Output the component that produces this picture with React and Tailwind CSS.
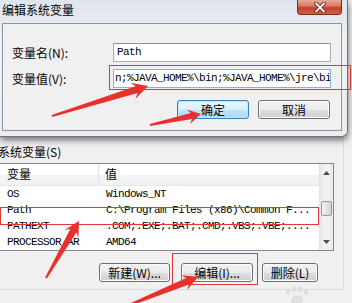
import React from 'react';

const cjk = "font-['Noto_Sans_CJK_SC','Microsoft_YaHei',sans-serif]";
const mono = "font-['Liberation_Mono','Noto_Sans_CJK_SC',monospace] text-[11px] tracking-[-0.6px]";

function arrowPoints([x1, y1], [x2, y2], tail, shaft, head, headLen) {
  const dx = x2 - x1;
  const dy = y2 - y1;
  const len = Math.hypot(dx, dy);
  const ux = dx / len;
  const uy = dy / len;
  const nx = -uy;
  const ny = ux;
  const bx = x2 - ux * headLen;
  const by = y2 - uy * headLen;
  const nb = x2 - ux * headLen * 0.75;
  const mb = y2 - uy * headLen * 0.75;
  const pts = [
    [x1 + (nx * tail) / 2, y1 + (ny * tail) / 2],
    [nb + (nx * shaft) / 2, mb + (ny * shaft) / 2],
    [bx + (nx * head) / 2, by + (ny * head) / 2],
    [x2, y2],
    [bx - (nx * head) / 2, by - (ny * head) / 2],
    [nb - (nx * shaft) / 2, mb - (ny * shaft) / 2],
    [x1 - (nx * tail) / 2, y1 - (ny * tail) / 2],
  ];
  return pts.map((p) => p.map((v) => v.toFixed(1)).join(',')).join(' ');
}

function WinButton({ children, className = '', isDefault = false }) {
  return (
    <div
      className={`h-[19px] flex items-center justify-center rounded-[3px] border text-[12px] leading-none text-black ${cjk} ${
        isDefault
          ? 'border-[#3c7fb1] bg-[linear-gradient(#eaf6fd_0%,#d9f0fc_50%,#bee6fd_51%,#a7d9f5_100%)] shadow-[inset_0_0_0_1px_#c4e5f6]'
          : 'border-[#707070] bg-[linear-gradient(#f2f2f2_0%,#ebebeb_50%,#dddddd_51%,#cfcfcf_100%)] shadow-[inset_0_0_0_1px_#fcfcfc]'
      } ${className}`}
    >
      {children}
    </div>
  );
}

const rows = [
  ['OS', 'Windows_NT'],
  ['Path', 'C:\\Program Files (x86)\\Common F...'],
  ['PATHEXT', '.COM;.EXE;.BAT;.CMD;.VBS;.VBE;....'],
  ['PROCESSOR_AR', 'AMD64'],
];

export default function App() {
  return (
    <div className={`w-[352px] h-[303px] relative overflow-hidden bg-[#f0f0f0] ${cjk}`}>
      {/* edit dialog */}
      <div className="relative z-10 w-[348px] h-[137px] rounded-br-[6px] border-r border-b border-[#6d7177] bg-[linear-gradient(#dfe5ec,#edf0f4_30%,#e9edf1)] shadow-[0_3px_7px_rgba(0,0,0,0.55)]">
        <div className="h-[23px] flex justify-between">
          <div className="pl-[2px] pt-[2px] text-[12px] leading-[16px] text-black">编辑系统变量</div>
          <div className="mr-[5px] w-[45px] h-[15px] rounded-b-[4px] border border-t-0 border-[#7a2e22] bg-[linear-gradient(#e9a99b,#d8735f_45%,#c4402a_55%,#d0603f)] flex items-center justify-center">
            <svg width="12" height="11" viewBox="0 0 12 11">
              <path d="M2 1.5 L10 9.5 M10 1.5 L2 9.5" stroke="#5a1d14" strokeWidth="3.4" strokeLinecap="square" />
              <path d="M2 1.5 L10 9.5 M10 1.5 L2 9.5" stroke="#ffffff" strokeWidth="1.8" strokeLinecap="square" />
            </svg>
          </div>
        </div>
        <div className="ml-[2px] w-[340px] h-[108px] border border-[#8b97a3] bg-[#f0f0f0]">
          <div className="mt-[19px] flex items-center h-[19px]">
            <div className="w-[110px] pl-[9px] text-[12px] text-black">变量名(N):</div>
            <div className="w-[218px] h-[19px] bg-white border border-[#abadb3] border-t-[#8e9196] flex items-center pl-[3px]">
              <span className={`${mono} text-black`}>Path</span>
            </div>
          </div>
          <div className="mt-[7px] flex items-center h-[19px]">
            <div className="w-[110px] pl-[9px] text-[12px] text-black">变量值(V):</div>
            <div className="w-[218px] h-[19px] bg-white border border-[#7eb4ea] flex items-center pl-[1px] overflow-hidden whitespace-nowrap">
              <span className={`${mono} text-black`}>n;%JAVA_HOME%\bin;%JAVA_HOME%\jre\bi</span>
            </div>
          </div>
          <div className="mt-[12px] flex pl-[174px] gap-[9px]">
            <WinButton isDefault className="w-[72px]">确定</WinButton>
            <WinButton className="w-[72px]">取消</WinButton>
          </div>
        </div>
      </div>

      {/* parent window: system variables group */}
      <div className="w-[344px] h-[153px] border-r border-b border-[#d5dbe1]">
        <div className="pt-[7px] -ml-[2px] text-[12px] leading-[16px] text-black">系统变量(S)</div>
        <div className="mt-[3px] -ml-[1px] w-[335px] h-[88px] border border-[#828790] bg-white flex">
          <div className="w-[319px] flex flex-col">
            <div className="h-[28px] flex border-b border-[#e5e5e5] bg-[linear-gradient(#ffffff_0%,#ffffff_50%,#f3f4f6_51%,#f1f2f4_100%)]">
              <div className="w-[99px] pl-[7px] border-r border-[#e2e3ea] flex items-end pb-[2px] text-[12px] text-black">变量</div>
              <div className="pl-[6px] flex items-end pb-[2px] text-[12px] text-black">值</div>
            </div>
            {rows.map(([name, value]) => (
              <div key={name} className="h-[16px] flex items-center whitespace-nowrap text-black">
                <div className={`w-[99px] pl-[7px] overflow-hidden ${mono}`}>{name}</div>
                <div className={`pl-[7px] ${mono}`}>{value}</div>
              </div>
            ))}
          </div>
          <div className="w-[14px] flex flex-col bg-[linear-gradient(90deg,#e6e6e6,#f1f1f1_30%,#f1f1f1_70%,#e6e6e6)] border-l border-[#e3e3e3]">
            <div className="h-[17px] flex items-center justify-center">
              <svg width="7" height="4" viewBox="0 0 7 4"><path d="M0 4 L3.5 0 L7 4 Z" fill="#4d4d4d" /></svg>
            </div>
            <div className="h-[20px]" />
            <div className="h-[15px] mx-[1px] rounded-[2px] border border-[#979797] bg-[linear-gradient(90deg,#f3f3f3,#e2e2e2_50%,#d4d4d4)]" />
            <div className="flex-1" />
            <div className="h-[17px] flex items-center justify-center">
              <svg width="7" height="4" viewBox="0 0 7 4"><path d="M0 0 L7 0 L3.5 4 Z" fill="#4d4d4d" /></svg>
            </div>
          </div>
        </div>
        <div className="mt-[12px] flex">
          <WinButton className="ml-[99px] w-[71px]">新建(W)...</WinButton>
          <WinButton className="ml-[11px] w-[72px]">编辑(I)...</WinButton>
          <WinButton className="ml-[9px] w-[56px]">删除(L)</WinButton>
        </div>
      </div>

      {/* annotations */}
      <div className="absolute left-[109px] top-[65px] w-[242px] h-[25px] border border-[#e3363a] z-20" />
      <div className="absolute left-[0px] top-[207px] w-[319px] h-[18px] border border-[#e3363a] z-20" />
      <div className="absolute left-[172px] top-[253px] w-[86px] h-[32px] border border-[#e3363a] z-20" />
      <svg className="absolute left-0 top-0 z-30" width="352" height="303" viewBox="0 0 352 303">
        <g fill="#e8302c">
          <polygon points={arrowPoints([52, 116], [148, 86], 2, 7, 17, 16)} />
          <polygon points={arrowPoints([150, 125], [201, 114], 2, 6, 15, 13)} />
          <polygon points={arrowPoints([46, 278], [79, 221], 2, 7, 16, 15)} />
          <polygon points={arrowPoints([122, 308], [198, 277], 2, 7, 16, 15)} />
        </g>
        <g fill="#dcdcdc" opacity="0.8">
          <ellipse cx="288" cy="292" rx="2.2" ry="3" />
          <ellipse cx="294" cy="289" rx="2.2" ry="3" />
          <ellipse cx="300" cy="289" rx="2.2" ry="3" />
          <ellipse cx="306" cy="292" rx="2.2" ry="3" />
          <ellipse cx="297" cy="300" rx="6" ry="4.5" />
        </g>
      </svg>
    </div>
  );
}
